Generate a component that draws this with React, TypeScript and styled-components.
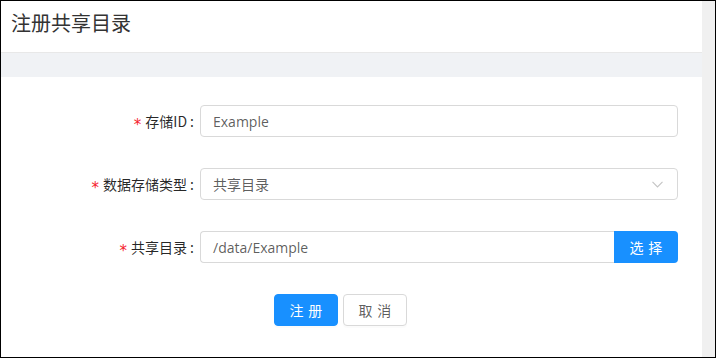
import React, { FC } from 'react';
import styled, { createGlobalStyle } from 'styled-components';

const GlobalStyle = createGlobalStyle`
  html, body {
    margin: 0;
    padding: 0;
    background: #fff;
  }
  * {
    box-sizing: border-box;
  }
  body {
    font-family: 'Open Sans', 'Noto Sans CJK SC', sans-serif;
    font-size: 14px;
  }
`;

const fields = [
  { label: '存储ID', value: 'Example', kind: 'input' },
  { label: '数据存储类型', value: '共享目录', kind: 'select' },
  { label: '共享目录', value: '/data/Example', kind: 'path' },
];

const Chevron: FC = () => (
  <svg width="11" height="7" viewBox="0 0 11 7" fill="none">
    <path d="M0.5 0.8 L5.5 6 L10.5 0.8" stroke="#c4c4c4" strokeWidth="1.1" />
  </svg>
);

const App: FC = () => {
  return (
    <Frame>
      <GlobalStyle />
      <Main>
        <Header>
          <Title>注册共享目录</Title>
        </Header>
        <Band />
        <Card>
          {fields.map((f, index) => (
            <FormRow key={index}>
              <Label>
                <Required>*</Required>
                {f.label}
                <Colon>:</Colon>
              </Label>
              <Control>
                {f.kind === 'path' ? (
                  <Group>
                    <Field joined>{f.value}</Field>
                    <AddonButton>
                      <Spaced>选择</Spaced>
                    </AddonButton>
                  </Group>
                ) : (
                  <Field>
                    <FieldText cjk={f.kind === 'select'}>{f.value}</FieldText>
                    {f.kind === 'select' && <Chevron />}
                  </Field>
                )}
              </Control>
            </FormRow>
          ))}
          <Actions>
            <Button primary>
              <Spaced>注册</Spaced>
            </Button>
            <Button>
              <Spaced>取消</Spaced>
            </Button>
          </Actions>
        </Card>
      </Main>
      <Gutter />
    </Frame>
  );
};

export default App;

const Frame = styled.div`
  width: 716px;
  height: 358px;
  border: 1px solid #000;
  display: flex;
  overflow: hidden;
`;

const Main = styled.div`
  flex: 1;
  display: flex;
  flex-direction: column;
  background: #fff;
`;

const Gutter = styled.div`
  width: 13px;
  background: #f0f0f0;
`;

const Header = styled.div`
  height: 52px;
  padding: 8px 10px 0;
  border-bottom: 1px solid #e8e8e8;
`;

const Title = styled.h1`
  margin: 0;
  font-family: 'Noto Sans CJK SC', sans-serif;
  font-size: 20px;
  font-weight: 400;
  line-height: 28px;
  color: #333;
`;

const Band = styled.div`
  height: 24px;
  background: #f0f2f5;
`;

const Card = styled.div`
  flex: 1;
  padding-top: 28px;
  background: #fff;
`;

const FormRow = styled.div`
  display: flex;
  align-items: center;
  margin-bottom: 31px;
`;

const Label = styled.label`
  width: 199px;
  padding-right: 6px;
  text-align: right;
  font-family: 'Noto Sans CJK SC', sans-serif;
  font-size: 14px;
  color: rgba(0, 0, 0, 0.85);
  line-height: 32px;
`;

const Required = styled.span`
  display: inline-block;
  color: #f5222d;
  margin-right: 4px;
  font-family: 'DejaVu Sans', sans-serif;
  font-size: 15px;
  line-height: 1;
  vertical-align: -3px;
`;

const Colon = styled.span`
  margin-left: 3px;
`;

const Control = styled.div`
  width: 478px;
`;

const Group = styled.div`
  display: flex;
`;

const Field = styled.div<{ joined?: boolean }>`
  flex: 1;
  height: 32px;
  display: flex;
  align-items: center;
  justify-content: space-between;
  padding: 0 14px 0 12px;
  border: 1px solid #d9d9d9;
  border-radius: ${({ joined }) => (joined ? '4px 0 0 4px' : '4px')};
  border-right-width: ${({ joined }) => (joined ? '0' : '1px')};
  color: rgba(0, 0, 0, 0.65);
  font-size: 14px;
`;

const FieldText = styled.span<{ cjk?: boolean }>`
  font-family: ${({ cjk }) => (cjk ? "'Noto Sans CJK SC', sans-serif" : "'Open Sans', 'Noto Sans CJK SC', sans-serif")};
`;

const Spaced = styled.span`
  letter-spacing: 0.34em;
  margin-right: -0.34em;
`;

const AddonButton = styled.button`
  width: 64px;
  height: 32px;
  border: none;
  border-radius: 0 4px 4px 0;
  background: #1890ff;
  color: #fff;
  font-family: 'Noto Sans CJK SC', sans-serif;
  font-size: 14px;
  padding: 0;
`;

const Actions = styled.div`
  display: flex;
  gap: 5px;
  padding-left: 273px;
`;

const Button = styled.button<{ primary?: boolean }>`
  width: 64px;
  height: 32px;
  padding: 0;
  border-radius: 4px;
  border: 1px solid ${({ primary }) => (primary ? '#1890ff' : '#d9d9d9')};
  background: ${({ primary }) => (primary ? '#1890ff' : '#fff')};
  color: ${({ primary }) => (primary ? '#fff' : 'rgba(0, 0, 0, 0.65)')};
  font-family: 'Noto Sans CJK SC', sans-serif;
  font-size: 14px;
  box-shadow: 0 2px 0 rgba(0, 0, 0, 0.015);
`;
